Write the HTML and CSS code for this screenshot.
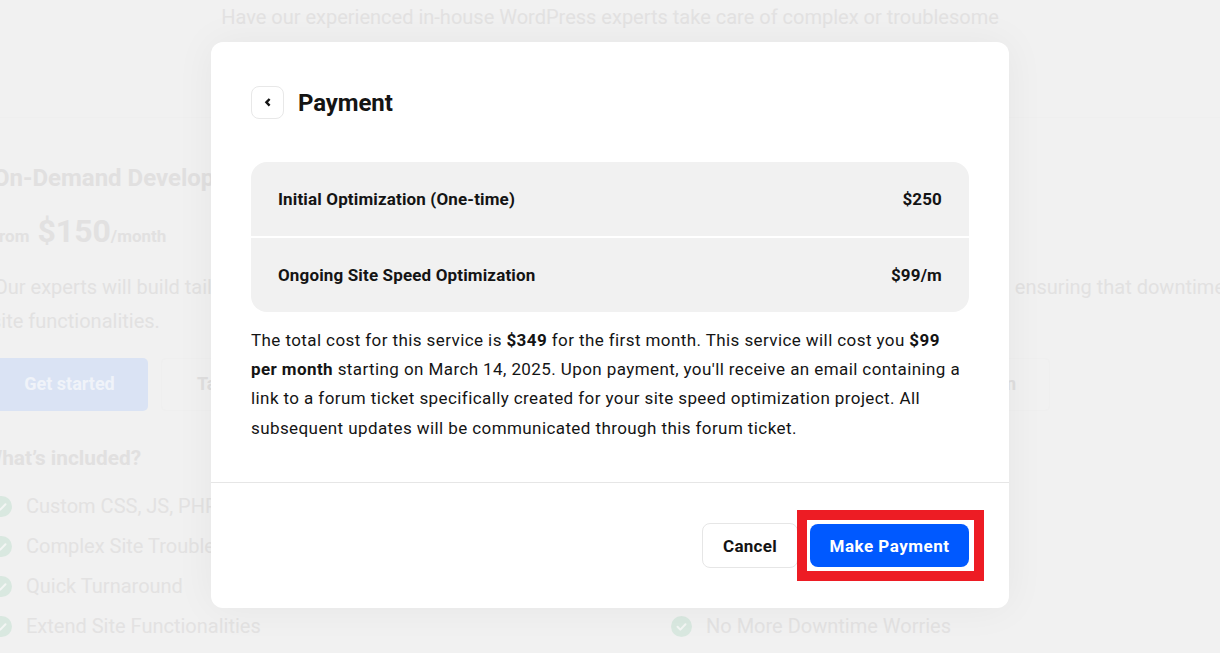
FILE: index.html
```html
<!DOCTYPE html>
<html lang="en">
<head>
<meta charset="utf-8">
<title>Payment</title>
<link rel="stylesheet" href="styles.css">
</head>
<body>
<div class="page">
  <p class="intro">Have our experienced in-house WordPress experts take care of complex or troublesome</p>
  <hr class="page-rule">
  <section class="plan">
    <h2 class="plan-title">On-Demand Development</h2>
    <div class="price"><span class="price-from">From</span><span class="price-value">$150</span><span class="price-unit">/month</span></div>
    <div class="desc-line"><span>Our experts will build tailored</span><span>ensuring that downtime</span></div>
    <p class="desc-tail">site functionalities.</p>
    <div class="cta-row">
      <span class="cta cta-primary">Get started</span>
      <span class="cta cta-ghost"><span>Talk</span><span>Learn</span></span>
    </div>
    <h3 class="included">What’s included?</h3>
    <ul class="features">
      <li class="feature"><svg class="tick" viewBox="0 0 21 21"><circle cx="10.5" cy="10.5" r="10.5"/><path d="M6.5 10.8l2.8 2.8 5.2-5.4"/></svg>Custom CSS, JS, PHP</li>
      <li class="feature"><svg class="tick" viewBox="0 0 21 21"><circle cx="10.5" cy="10.5" r="10.5"/><path d="M6.5 10.8l2.8 2.8 5.2-5.4"/></svg>Complex Site Troubleshooting</li>
      <li class="feature"><svg class="tick" viewBox="0 0 21 21"><circle cx="10.5" cy="10.5" r="10.5"/><path d="M6.5 10.8l2.8 2.8 5.2-5.4"/></svg>Quick Turnaround</li>
      <li class="feature"><svg class="tick" viewBox="0 0 21 21"><circle cx="10.5" cy="10.5" r="10.5"/><path d="M6.5 10.8l2.8 2.8 5.2-5.4"/></svg>Extend Site Functionalities</li>
      <li class="feature feature-right"><svg class="tick" viewBox="0 0 21 21"><circle cx="10.5" cy="10.5" r="10.5"/><path d="M6.5 10.8l2.8 2.8 5.2-5.4"/></svg>No More Downtime Worries</li>
    </ul>
  </section>

  <div class="modal" role="dialog" aria-label="Payment">
    <div class="modal-body">
      <header class="modal-head">
        <button class="back" type="button" aria-label="Back">
          <svg viewBox="0 0 8 10" width="8" height="10"><path d="M5.6 1L2.4 4.3l3.2 3.3"/></svg>
        </button>
        <h1 class="modal-title">Payment</h1>
      </header>
      <div class="summary">
        <div class="summary-row"><span>Initial Optimization (One-time)</span><span>$250</span></div>
        <div class="summary-row"><span>Ongoing Site Speed Optimization</span><span>$99/m</span></div>
      </div>
      <p class="note">The total cost for this service is <b>$349</b> for the first month. This service will cost you <b>$99 per month</b> starting on March 14, 2025. Upon payment, you'll receive an email containing a link to a forum ticket specifically created for your site speed optimization project. All subsequent updates will be communicated through this forum ticket.</p>
    </div>
    <footer class="modal-foot">
      <button class="btn btn-cancel" type="button">Cancel</button>
      <button class="btn btn-pay" type="button">Make Payment</button>
    </footer>
  </div>
</div>
</body>
</html>
```
FILE: styles.css
```css
* { box-sizing: border-box; }
html, body { margin: 0; padding: 0; }
body { font-family: Roboto, "Liberation Sans", sans-serif; background: #f1f1f1; }

.page {
  position: relative;
  width: 1220px;
  height: 653px;
  overflow: hidden;
  background: #f1f1f1;
  color: #e2e1e1;
}

.intro {
  margin: 0;
  padding-top: 5px;
  font-size: 20px;
  line-height: 24px;
  text-align: center;
  color: #e3e2e2;
}
.page-rule { margin: 88px 0 0; border: 0; border-top: 1px solid #efefef; }

.plan { margin-left: -6px; width: 1231px; }
.plan-title { margin: 44px 0 0 -1px; font-size: 24px; line-height: 32px; font-weight: 700; white-space: nowrap; color: #e1e0e0; }
.price { display: flex; align-items: baseline; margin: 12px 0 0; height: 50px; line-height: 50px; white-space: nowrap; }
.price-from { font-size: 17px; font-weight: 700; margin: 0 8px 0 -4px; }
.price-value { font-size: 32px; font-weight: 700; }
.price-unit { font-size: 17px; font-weight: 700; }
.desc-line { display: flex; justify-content: space-between; margin-top: 14px; font-size: 20px; line-height: 34px; white-space: nowrap; }
.desc-tail { margin: 0 0 0 -3px; font-size: 20px; line-height: 34px; }

.cta-row { display: flex; gap: 13px; margin-top: 20px; margin-left: -3px; height: 53px; }
.cta { display: flex; align-items: center; padding-bottom: 2px; border-radius: 5px; font-size: 18px; font-weight: 700; }
.cta-primary { width: 157px; justify-content: center; background: #dae3f4; color: #f0f3f9; }
.cta-ghost { width: 889px; padding: 0 33px 2px 35px; justify-content: space-between; border: 1px solid #efefef; color: #e0dfdf; }

.included { margin: 33px 0 0 -10px; font-size: 20.8px; line-height: 28px; font-weight: 700; color: #e1e0e0; }

.features { list-style: none; margin: 14px 0 0 -3px; padding: 0; display: grid; grid-template-columns: 680px auto; grid-auto-rows: 40px; }
.feature { display: flex; align-items: center; gap: 14px; font-size: 20px; line-height: 40px; grid-column: 1; white-space: nowrap; color: #e3e2e2; }
.feature-right { grid-column: 2; grid-row: 4; }
.tick { width: 21px; height: 21px; flex: none; }
.tick circle { fill: #d9e8e0; }
.tick path { fill: none; stroke: #f3f6f4; stroke-width: 2; stroke-linecap: round; stroke-linejoin: round; }

.modal {
  position: absolute;
  left: 211px;
  top: 42px;
  width: 798px;
  height: 566px;
  display: flex;
  flex-direction: column;
  background: #fff;
  border-radius: 12px;
  box-shadow: 0 0 40px rgba(0, 0, 0, .05);
  color: #141414;
}
.modal-body { padding: 44px 40px 0; flex: 1; }
.modal-head { display: flex; align-items: center; gap: 14px; height: 33px; }
.back {
  width: 33px;
  height: 33px;
  display: flex;
  align-items: center;
  justify-content: center;
  padding: 0;
  background: #fff;
  border: 1px solid #e8e8e8;
  border-radius: 8px;
}
.back path { fill: none; stroke: #141414; stroke-width: 2.4; }
.modal-title { margin: 0; padding-top: 2px; font-size: 24px; line-height: 33px; font-weight: 700; letter-spacing: -.1px; }

.summary { margin-top: 43px; border-radius: 16px; overflow: hidden; display: flex; flex-direction: column; gap: 2px; }
.summary-row {
  display: flex;
  justify-content: space-between;
  align-items: center;
  height: 74px;
  padding: 0 27px;
  background: #f1f1f1;
  font-size: 17px;
  font-weight: 700;
  letter-spacing: .15px;
}
.note { margin: 14px 0 0; font-size: 17px; line-height: 29.2px; letter-spacing: .41px; }
.note b { font-weight: 700; }

.modal-foot {
  display: flex;
  justify-content: flex-end;
  align-items: center;
  gap: 12px;
  height: 126px;
  padding: 0 40px 0 0;
  border-top: 1px solid #e6e6e6;
}
.btn { font-family: inherit; font-size: 17px; font-weight: 700; border-radius: 8px; }
.btn-cancel { width: 96px; height: 45px; background: #fff; border: 1px solid #e6e6e6; color: #141414; letter-spacing: .3px; }
.btn-pay { position: relative; width: 159px; height: 43px; background: #0059ff; border: 0; color: #fff; letter-spacing: .5px; }
.btn-pay::after {
  content: "";
  position: absolute;
  inset: -14px -15px -14px -13px;
  border: 10px solid #ed1c24;
  pointer-events: none;
}
```
